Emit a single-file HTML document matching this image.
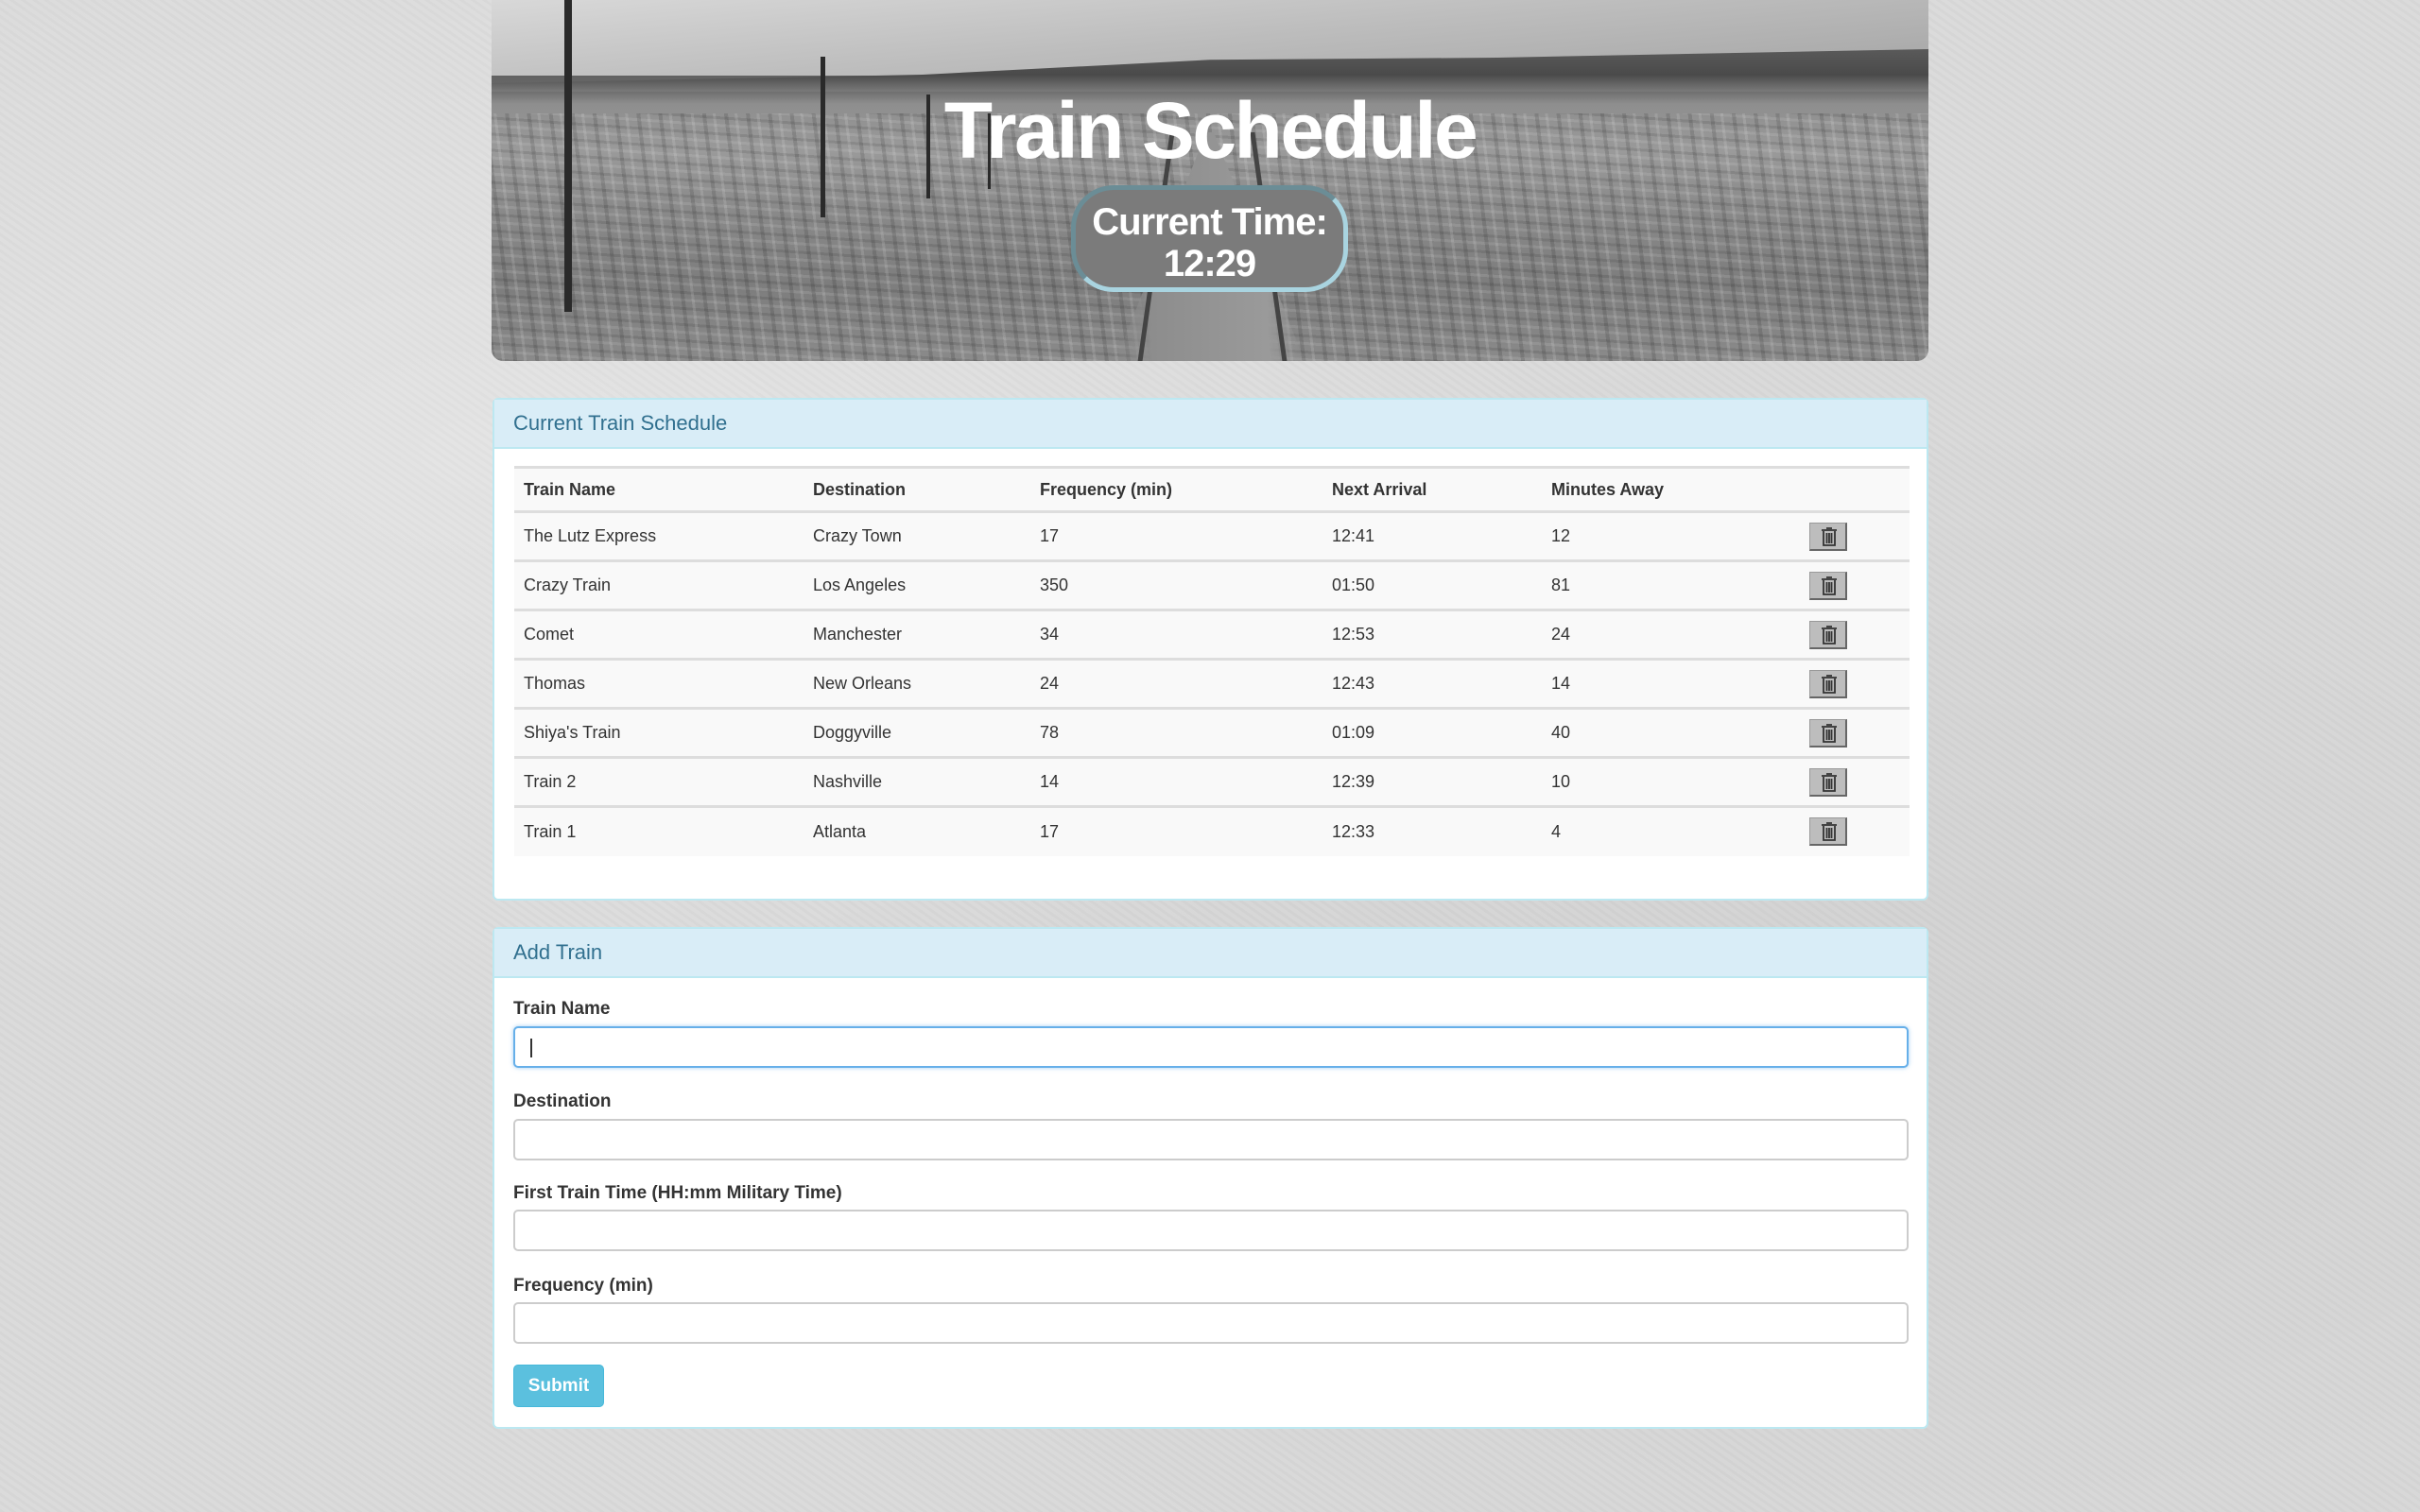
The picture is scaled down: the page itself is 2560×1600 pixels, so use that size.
<!DOCTYPE html>
<html><head><meta charset="utf-8"><style>
*{box-sizing:border-box;margin:0;padding:0}
body{width:2560px;height:1600px;overflow:hidden;background:#dcdcdc;font-family:"Liberation Sans",Arial,sans-serif;color:#333;position:relative}
.bg{position:absolute;inset:0;background:
radial-gradient(ellipse at 20% 30%,rgba(255,255,255,.25),transparent 40%),
radial-gradient(ellipse at 80% 70%,rgba(0,0,0,.04),transparent 50%),
repeating-linear-gradient(35deg,rgba(0,0,0,.02) 0 3px,rgba(255,255,255,.03) 3px 7px),#dadada}
.banner{position:absolute;left:520px;top:0;width:1520px;height:382px;border-radius:0 0 12px 12px;overflow:hidden;
background:linear-gradient(to bottom,#c9c9c9 0,#b5b5b5 40px,#9a9a9a 60px,#5f5f5f 75px,#6a6a6a 95px,#8e8e8e 110px,#9a9a9a 160px,#8a8a8a 220px,#7d7d7d 300px,#8a8a8a 382px)}
.tex{position:absolute;left:0;top:120px;width:100%;height:262px;background:
repeating-linear-gradient(83deg,rgba(0,0,0,.12) 0 4px,transparent 4px 11px,rgba(255,255,255,.12) 11px 14px,transparent 14px 23px),
repeating-linear-gradient(4deg,rgba(0,0,0,.1) 0 3px,transparent 3px 9px,rgba(255,255,255,.1) 9px 12px,transparent 12px 17px)}
.sky{position:absolute;left:0;top:0;width:100%;height:80px;background:linear-gradient(175deg,#d8d8d8 0,#bdbdbd 50%,#a5a5a5 100%)}
.mesa{position:absolute;left:0;top:52px;width:100%;height:45px;background:linear-gradient(to bottom,#5a5a5a,#4a4a4a 60%,#7a7a7a);clip-path:polygon(0 80%,30% 60%,50% 25%,70% 20%,100% 0,100% 100%,0 100%)}
.track{position:absolute;left:660px;top:140px;width:200px;height:242px;background:linear-gradient(to right,transparent 0,#8d8d8d 20%,#9a9a9a 80%,transparent);clip-path:polygon(48% 0,52% 0,100% 100%,0 100%)}
.rail{position:absolute;top:140px;width:5px;height:250px;background:#444}
.pole{position:absolute;background:#2a2a2a;width:8px}
h1{position:absolute;left:0;width:100%;top:88px;text-align:center;color:#fff;font-size:84px;font-weight:bold;letter-spacing:-2.5px;line-height:100px}
.time{position:absolute;left:1133px;top:196px;width:293px;height:113px;background:#7b7b7b;border:5px solid #a9d4e0;border-top-color:#6b8d96;border-left-color:#6b8d96;border-radius:45px;color:#fff;font-weight:bold;font-size:40px;line-height:44px;text-align:center;padding-top:12px;letter-spacing:-1px}
.panel{position:absolute;left:521px;width:1519px;background:#fff;border:2px solid #bce8f1;border-radius:6px}
.ph{background:#d9edf7;color:#31708f;font-size:22px;height:52px;line-height:50px;padding-left:20px;border-bottom:2px solid #bce8f1}
table{position:absolute;left:21px;top:70px;width:1476px;border-collapse:collapse;font-size:18px}
th,td{text-align:left;padding:0 0 0 10px;border-top:3px solid #ddd;background:#f9f9f9;height:52px}
th{height:47px;font-weight:bold}
.tr{display:inline-block;width:40px;height:30px;background:#bdbdbd;border:1px solid #999;border-right:2px solid #666;border-bottom:2px solid #666;vertical-align:middle;position:relative}
.tr svg{position:absolute;left:11px;top:3px}
label{position:absolute;left:20px;font-weight:bold;font-size:19px}
.in{position:absolute;left:20px;width:1476px;height:44px;border:2px solid #ccc;border-radius:5px;background:#fff}
.in.f{border-color:#66afe9;box-shadow:0 0 5px rgba(102,175,233,.6)}
.btn{position:absolute;left:20px;width:96px;height:45px;background:#5bc0de;border:1px solid #46b8da;border-radius:5px;color:#fff;font-weight:bold;font-size:19px;text-align:center;line-height:43px}
</style></head><body>
<div class="bg"></div>
<div class="banner">
<div class="sky"></div><div class="mesa"></div><div class="tex"></div><div class="track"></div>
<div class="rail" style="left:700px;transform:skewX(-8deg)"></div>
<div class="rail" style="left:820px;transform:skewX(8deg)"></div>
<div class="pole" style="left:77px;top:0;height:330px"></div>
<div class="pole" style="left:348px;top:60px;height:170px;width:5px"></div>
<div class="pole" style="left:460px;top:100px;height:110px;width:4px"></div>
<div class="pole" style="left:525px;top:120px;height:80px;width:3px"></div>
</div>
<h1>Train Schedule</h1>
<div class="time">Current Time:<br>12:29</div>

<div class="panel" style="top:421px;height:532px">
<div class="ph">Current Train Schedule</div>
<table>
<tr><th style="width:306px">Train Name</th><th style="width:240px">Destination</th><th style="width:309px">Frequency (min)</th><th style="width:232px">Next Arrival</th><th>Minutes Away</th><th style="width:116px"></th></tr>
<tr><td>The Lutz Express</td><td>Crazy Town</td><td>17</td><td>12:41</td><td>12</td><td><span class="tr"><svg width="18" height="22" viewBox="0 0 18 22"><path d="M6 2h6M1 4h16M3 5v15h12V5M6.5 7v11M9 7v11M11.5 7v11" stroke="#333" stroke-width="1.8" fill="none"/></svg></span></td></tr>
<tr><td>Crazy Train</td><td>Los Angeles</td><td>350</td><td>01:50</td><td>81</td><td><span class="tr"><svg width="18" height="22" viewBox="0 0 18 22"><path d="M6 2h6M1 4h16M3 5v15h12V5M6.5 7v11M9 7v11M11.5 7v11" stroke="#333" stroke-width="1.8" fill="none"/></svg></span></td></tr>
<tr><td>Comet</td><td>Manchester</td><td>34</td><td>12:53</td><td>24</td><td><span class="tr"><svg width="18" height="22" viewBox="0 0 18 22"><path d="M6 2h6M1 4h16M3 5v15h12V5M6.5 7v11M9 7v11M11.5 7v11" stroke="#333" stroke-width="1.8" fill="none"/></svg></span></td></tr>
<tr><td>Thomas</td><td>New Orleans</td><td>24</td><td>12:43</td><td>14</td><td><span class="tr"><svg width="18" height="22" viewBox="0 0 18 22"><path d="M6 2h6M1 4h16M3 5v15h12V5M6.5 7v11M9 7v11M11.5 7v11" stroke="#333" stroke-width="1.8" fill="none"/></svg></span></td></tr>
<tr><td>Shiya's Train</td><td>Doggyville</td><td>78</td><td>01:09</td><td>40</td><td><span class="tr"><svg width="18" height="22" viewBox="0 0 18 22"><path d="M6 2h6M1 4h16M3 5v15h12V5M6.5 7v11M9 7v11M11.5 7v11" stroke="#333" stroke-width="1.8" fill="none"/></svg></span></td></tr>
<tr><td>Train 2</td><td>Nashville</td><td>14</td><td>12:39</td><td>10</td><td><span class="tr"><svg width="18" height="22" viewBox="0 0 18 22"><path d="M6 2h6M1 4h16M3 5v15h12V5M6.5 7v11M9 7v11M11.5 7v11" stroke="#333" stroke-width="1.8" fill="none"/></svg></span></td></tr>
<tr><td>Train 1</td><td>Atlanta</td><td>17</td><td>12:33</td><td>4</td><td><span class="tr"><svg width="18" height="22" viewBox="0 0 18 22"><path d="M6 2h6M1 4h16M3 5v15h12V5M6.5 7v11M9 7v11M11.5 7v11" stroke="#333" stroke-width="1.8" fill="none"/></svg></span></td></tr>
</table>
</div>

<div class="panel" style="top:981px;height:531px">
<div class="ph">Add Train</div>
<label style="top:74px">Train Name</label>
<div class="in f" style="top:103px"><div style="position:absolute;left:16px;top:11px;width:2px;height:20px;background:#333"></div></div>
<label style="top:172px">Destination</label>
<div class="in" style="top:201px"></div>
<label style="top:269px">First Train Time (HH:mm Military Time)</label>
<div class="in" style="top:297px"></div>
<label style="top:367px">Frequency (min)</label>
<div class="in" style="top:395px"></div>
<div class="btn" style="top:461px">Submit</div>
</div>
</body></html>
